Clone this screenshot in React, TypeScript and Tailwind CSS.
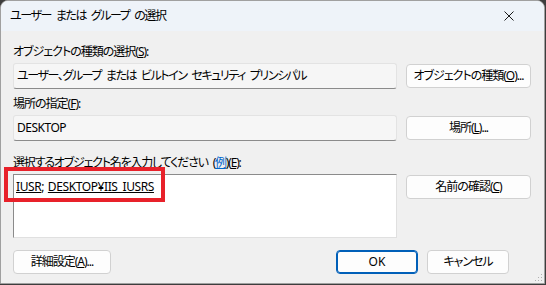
import React from 'react';

const font = "font-['Noto_Sans','Noto_Sans_CJK_JP',sans-serif] [font-feature-settings:'palt'] [word-spacing:3px]";

function Btn({ children, primary = false, className = '' }: { children: React.ReactNode; primary?: boolean; className?: string }) {
    return (
        <div
            className={`flex h-[24px] items-center justify-center whitespace-nowrap rounded-[4px] bg-[#fdfdfd] text-[12px] leading-none tracking-[-1px] text-black ${primary ? 'border border-[#005fb8] shadow-[inset_0_0_0_1px_#005fb8]' : 'border border-[#d1d1d1]'
                } ${className}`}
        >
            {children}
        </div>
    );
}

function Field({ children, className = '' }: { children: React.ReactNode; className?: string }) {
    return (
        <div className={`flex h-[26px] w-[384px] items-center whitespace-pre rounded-[3px] border border-[#e3e3e3] border-b-[#8b8b8b] bg-[#f6f6f6] px-[3px] text-[12px] text-black ${className}`}>
            {children}
        </div>
    );
}

export default function App() {
    return (
        <div className={`h-[285px] w-[546px] bg-[#3d3d3d] ${font}`}>
            <div className="relative h-[284px] w-[545px] overflow-hidden rounded-t-[8px] border border-[#a0a0a0] bg-[#f0f0f0]">
                {/* title bar */}
                <div className="flex h-[30px] items-center justify-between bg-[#eef3f9] pl-[9px] pr-[30px]">
                    <span className="text-[12px] tracking-[-1.4px] text-black">ユーザー または グループ の選択</span>
                    <svg width="10" height="10" viewBox="0 0 10 10">
                        <path d="M0.5 0.5 L9.5 9.5 M9.5 0.5 L0.5 9.5" stroke="#1a1a1a" strokeWidth="1" />
                    </svg>
                </div>

                <div className="pl-[12px]">
                    <div className="mt-[14px] text-[12px] leading-[14px] tracking-[-1px] text-black">
                        オブジェクトの種類の選択(<u>S</u>):
                    </div>
                    <div className="mt-[4px] flex items-center gap-[9px]">
                        <Field className="tracking-[-1.4px]">ユーザー、グループ または ビルトイン セキュリティ プリンシパル</Field>
                        <Btn className="w-[125px]">
                            オブジェクトの種類(<u>O</u>)...
                        </Btn>
                    </div>

                    <div className="mt-[8px] text-[12px] leading-[14px] tracking-[-1px] text-black">
                        場所の指定(<u>F</u>):
                    </div>
                    <div className="mt-[4px] flex items-center gap-[9px]">
                        <Field className="tracking-[-0.5px]">DESKTOP</Field>
                        <Btn className="w-[125px]">
                            場所(<u>L</u>)...
                        </Btn>
                    </div>

                    <div className="mt-[15px] whitespace-pre text-[12px] leading-[14px] tracking-[-1.2px] text-black">
                        選択するオブジェクト名を入力してください (<u className="text-[#0066cc]">例</u>)(<u>E</u>):
                    </div>
                    <div className="mt-[4px] flex items-start gap-[9px]">
                        <div className="h-[64px] w-[384px] whitespace-pre border border-[#e0e0e0] border-l-[#8b8b8b] border-t-[#8b8b8b] bg-white px-[2px] pt-[4px] text-[12px] leading-[16px] tracking-[-0.4px] text-black [word-spacing:1px]">
                            <u>IUSR</u>; <u>DESKTOP¥IIS_IUSRS</u>
                        </div>
                        <Btn className="mt-[1px] w-[125px]">
                            名前の確認(<u>C</u>)
                        </Btn>
                    </div>

                    <div className="mt-[12px] flex items-center">
                        <Btn className="w-[98px]">
                            詳細設定(<u>A</u>)...
                        </Btn>
                        <div className="flex-1" />
                        <Btn primary className="w-[82px] tracking-normal">
                            OK
                        </Btn>
                        <Btn className="ml-[9px] mr-[35px] w-[82px]">キャンセル</Btn>
                    </div>
                </div>

                {/* highlight */}
                <div className="absolute left-[3px] top-[166px] h-[35px] w-[161px] border-[4px] border-[#e8212a]" />

                {/* resize grip */}
                <svg className="absolute bottom-[1px] right-[1px]" width="8" height="8" viewBox="0 0 8 8">
                    <rect x="6" y="0" width="1" height="1" fill="#b0b0b0" />
                    <rect x="3" y="3" width="1" height="1" fill="#b0b0b0" />
                    <rect x="6" y="3" width="1" height="1" fill="#b0b0b0" />
                    <rect x="0" y="6" width="1" height="1" fill="#b0b0b0" />
                    <rect x="3" y="6" width="1" height="1" fill="#b0b0b0" />
                    <rect x="6" y="6" width="1" height="1" fill="#b0b0b0" />
                </svg>
            </div>
        </div>
    );
}
